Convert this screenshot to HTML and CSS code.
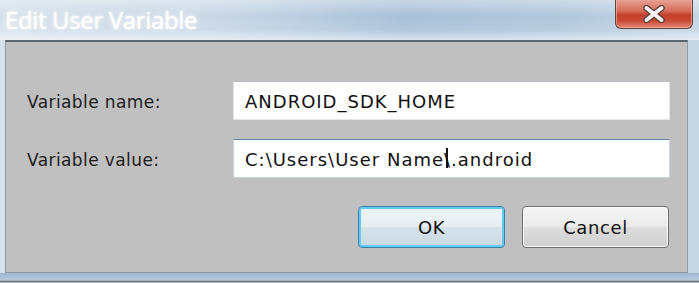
FILE: index.html
```html
<!DOCTYPE html>
<html>
<head>
<meta charset="utf-8">
<link rel="stylesheet" href="styles.css">
</head>
<body>
<div class="window">
  <div class="titlebar">
    <span class="title">Edit User Variable</span>
    <div class="close">
      <svg width="24" height="18" viewBox="0 0 24 18">
        <path d="M4.5 3 L19.5 15 M19.5 3 L4.5 15" stroke="#5a3a36" stroke-width="6.4" stroke-linecap="round" fill="none"/>
        <path d="M4.5 3 L19.5 15 M19.5 3 L4.5 15" stroke="#f6f2f2" stroke-width="4" stroke-linecap="round" fill="none"/>
      </svg>
    </div>
  </div>
  <div class="frame">
    <div class="content">
      <div class="form">
        <label class="label">Variable name:</label>
        <div class="field">ANDROID_SDK_HOME</div>
        <label class="label">Variable value:</label>
        <div class="field focused"><span>C:\Users\User Name<span class="bs">\<span class="ibeam"></span></span>.android</span></div>
      </div>
      <div class="buttons">
        <div class="btn default">OK</div>
        <div class="btn">Cancel</div>
      </div>
    </div>
  </div>
  <div class="bottom"></div>
</div>
</body>
</html>
```
FILE: styles.css
```css
html, body {
  margin: 0;
  padding: 0;
}
body {
  width: 699px;
  height: 283px;
  overflow: hidden;
  background: #c8d2dc;
}
.window {
  width: 699px;
  height: 283px;
  display: flex;
  flex-direction: column;
  background: linear-gradient(90deg, #d6e0ea 0%, #cad8e6 30%, #a9c0d7 58%, #b2c7db 80%, #c6d6e5 100%);
}
.titlebar {
  height: 40px;
  flex: none;
  display: flex;
  align-items: flex-start;
  justify-content: space-between;
  background: linear-gradient(180deg, rgba(255,255,255,0.35) 0%, rgba(255,255,255,0) 40%, rgba(255,255,255,0.1) 75%, rgba(255,255,255,0.55) 100%);
}
.title {
  font-family: "Open Sans", "Noto Sans", sans-serif;
  font-size: 24px;
  color: #ffffff;
  padding: 6px 0 0 5px;
  letter-spacing: -0.35px;
  text-shadow: 0 0 6px rgba(255,255,255,0.9), 0 0 2px rgba(255,255,255,0.8);
  line-height: 28px;
}
.close {
  width: 78px;
  height: 30px;
  margin-right: 6px;
  margin-top: -1px;
  box-sizing: border-box;
  border: 1px solid #5e4540;
  border-top: none;
  border-radius: 0 0 6px 6px;
  background: linear-gradient(180deg, #e8a597 0%, #d56f5c 40%, #c4402c 55%, #c84a36 75%, #e48a76 100%);
  box-shadow: inset 0 0 0 1px rgba(255,200,190,0.5);
  display: flex;
  align-items: center;
  justify-content: center;
}
.frame {
  flex: 1;
  display: flex;
  padding: 0 11px 0 5px;
}
.content {
  flex: 1;
  background: #c0c0c0;
  border-top: 2px solid #5c666f;
  border-left: 1px solid #8d9aa6;
  border-right: 1px solid #8d9aa6;
  border-bottom: 1px solid #8d9aa6;
  padding: 39px 17px 0 21px;
  display: flex;
  flex-direction: column;
  font-family: "DejaVu Sans", sans-serif;
  color: #111;
}
.form {
  display: grid;
  grid-template-columns: 206px 1fr;
  row-gap: 19px;
  align-items: center;
}
.label {
  font-size: 17px;
  letter-spacing: 0.4px;
  color: #1c1c1c;
  padding-top: 3px;
}
.field {
  height: 39px;
  box-sizing: border-box;
  background: #ffffff;
  border: 1px solid #e2e6ea;
  border-top-color: #b8bcc2;
  padding: 2px 0 0 11px;
  font-size: 18px;
  letter-spacing: 1px;
  display: flex;
  align-items: center;
  color: #111;
}
.field.focused {
  border-color: #c6d4e2;
  border-top: 1px solid #5f85ab;
}
.bs {
  position: relative;
}
.ibeam {
  position: absolute;
  left: 2px;
  top: -1px;
  width: 2px;
  height: 20px;
  background: #111;
}
.buttons {
  margin-top: 28px;
  display: flex;
  justify-content: flex-end;
  gap: 17px;
  padding-right: 1px;
}
.btn {
  width: 147px;
  height: 42px;
  box-sizing: border-box;
  border: 1px solid #707070;
  border-radius: 4px;
  background: linear-gradient(180deg, #f4f4f4 0%, #ececec 48%, #dcdcdc 52%, #d0d0d0 100%);
  box-shadow: inset 0 0 0 1px #fafafa;
  display: flex;
  align-items: center;
  justify-content: center;
  font-size: 18px;
  letter-spacing: 0.6px;
  color: #111;
  padding-top: 1px;
}
.btn.default {
  border-color: #3c7fb1;
  box-shadow: inset 0 0 0 2px #61cbf0;
  background: linear-gradient(180deg, #eef5f9 0%, #e6eef3 48%, #d6e2ea 52%, #cad9e2 100%);
}
.bottom {
  height: 10px;
  flex: none;
  background: linear-gradient(180deg, #9fb6cc 0%, #b7cadc 70%, #6e7a86 85%, #c0c4c8 100%);
}
```
